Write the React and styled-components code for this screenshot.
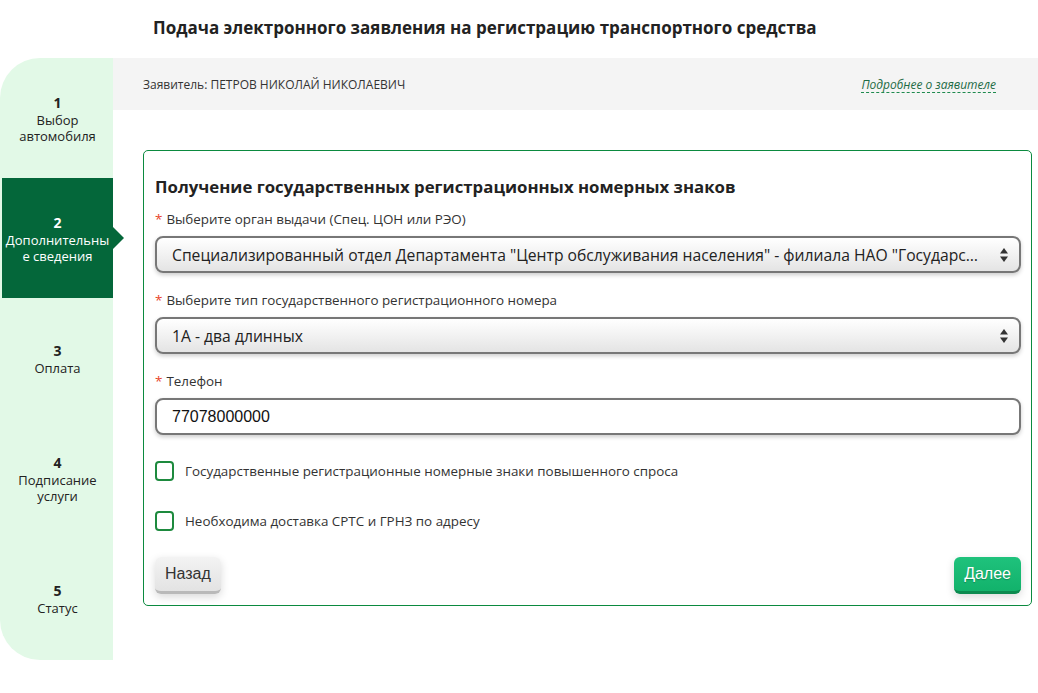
import React from "react";
import styled, { createGlobalStyle } from "styled-components";

const Global = createGlobalStyle`
  html, body { margin: 0; padding: 0; background: #fff; }
  body { font-family: "Open Sans", "Noto Sans", sans-serif; color: #222; }
  * { box-sizing: border-box; }
`;

const Page = styled.div`
  width: 1038px;
  height: 693px;
  overflow: hidden;
`;

const Title = styled.h1`
  margin: 0;
  height: 58px;
  padding: 17px 0 0 153px;
  font-size: 17px;
  line-height: 22px;
  font-weight: 700;
  color: #222;
`;

const Layout = styled.div`
  display: flex;
  align-items: flex-start;
`;

const Sidebar = styled.nav`
  width: 113px;
  flex: none;
  height: 602px;
  background: #e2f9e7;
  border-radius: 40px 0 0 40px;
  display: flex;
  flex-direction: column;
  padding-left: 2px;
`;

const Step = styled.div`
  position: relative;
  height: 120px;
  flex: none;
  display: flex;
  flex-direction: column;
  align-items: center;
  justify-content: center;
  text-align: center;
  background: ${(p) => (p.$active ? "#04673a" : "transparent")};
  color: ${(p) => (p.$active ? "#fff" : "#222")};
  font-size: 13px;
  line-height: 16px;
  ${(p) =>
    p.$active &&
    `
    &::after {
      content: "";
      position: absolute;
      right: -11px;
      top: 50%;
      margin-top: -11px;
      border-top: 11px solid transparent;
      border-bottom: 11px solid transparent;
      border-left: 11px solid #04673a;
    }
  `}
`;

const StepNum = styled.div`
  font-weight: 700;
  font-size: 14px;
  line-height: 19px;
`;

const StepLabel = styled.div`
  width: 112px;
`;

const Main = styled.main`
  flex: 1;
  min-width: 0;
  display: flex;
  flex-direction: column;
`;

const Applicant = styled.div`
  height: 52px;
  background: #f4f4f4;
  display: flex;
  align-items: center;
  justify-content: space-between;
  padding: 0 42px 0 30px;
`;

const ApplicantName = styled.span`
  font-size: 12px;
  color: #333;
`;

const MoreLink = styled.a`
  font-style: italic;
  font-size: 12px;
  color: #1e6b45;
  text-decoration: none;
  border-bottom: 1px dashed #1e8a4e;
  line-height: 14px;
  margin-top: 2px;
`;

const Card = styled.section`
  margin: 40px 6px 0 30px;
  border: 1px solid #0b8a3f;
  border-radius: 5px;
  padding: 25px 10px 11px 11px;
`;

const CardTitle = styled.h2`
  margin: 0 0 13px;
  font-size: 16.8px;
  line-height: 22px;
  font-weight: 700;
  color: #222;
`;

const Field = styled.div`
  margin-bottom: ${(p) => p.$mb || 19}px;
`;

const Label = styled.label`
  display: block;
  font-size: 13.4px;
  line-height: 17px;
  color: #333;
  margin-bottom: 8px;
`;

const Req = styled.span`
  color: #e8452c;
  margin-right: 4px;
`;

const SelectBox = styled.div`
  position: relative;
  height: 37px;
  border: 2px solid #777;
  border-radius: 8px;
  background: linear-gradient(#ffffff, #e4e4e4);
  box-shadow: 0 2px 4px rgba(0, 0, 0, 0.2);
  display: flex;
  align-items: center;
  padding: 0 34px 0 15px;
  font-size: 15.7px;
  color: #222;
`;

const SelectText = styled.span`
  flex: 1;
  min-width: 0;
  white-space: nowrap;
  overflow: hidden;
  text-overflow: ellipsis;
`;

const Arrows = styled.svg`
  position: absolute;
  right: 10px;
  top: 50%;
  margin-top: -8px;
`;

const Input = styled.div`
  height: 37px;
  border: 2px solid #777;
  border-radius: 8px;
  background: #fff;
  box-shadow: 0 2px 4px rgba(0, 0, 0, 0.2);
  display: flex;
  align-items: center;
  padding: 0 15px;
  font-family: "Liberation Sans", Arial, sans-serif;
  font-size: 16px;
  color: #111;
`;

const CheckRow = styled.label`
  display: flex;
  align-items: center;
  gap: 11px;
  height: 20px;
  margin-bottom: ${(p) => p.$mb || 30}px;
  font-size: 13.4px;
  color: #333;
`;

const Box = styled.span`
  width: 19px;
  height: 20px;
  border: 2px solid #1d8a3e;
  border-radius: 4px;
  flex: none;
`;

const Actions = styled.div`
  display: flex;
  justify-content: space-between;
  align-items: center;
`;

const Button = styled.button`
  height: 37px;
  padding: 0 10px;
  border: none;
  border-radius: 6px;
  font-family: "Liberation Sans", Arial, sans-serif;
  font-size: 16px;
  cursor: pointer;
  background: ${(p) =>
    p.$primary
      ? "linear-gradient(#1fc27c, #12b26b)"
      : "linear-gradient(#f3f3f3, #e3e3e3)"};
  color: ${(p) => (p.$primary ? "#fff" : "#333")};
  border-bottom: 3px solid ${(p) => (p.$primary ? "#0c8a4f" : "#b9b9b9")};
  box-shadow: 0 3px 8px rgba(0, 0, 0, 0.15);
  text-shadow: ${(p) => (p.$primary ? "0 1px 1px rgba(0,0,0,0.25)" : "none")};
`;

const SelectArrows = () => (
  <Arrows width="10" height="16" viewBox="0 0 10 16">
    <path d="M5 1 L9 6.5 L1 6.5 Z" fill="#333" />
    <path d="M5 15 L9 9.5 L1 9.5 Z" fill="#333" />
  </Arrows>
);

const steps = [
  ["1", ["Выбор", "автомобиля"]],
  ["2", ["Дополнительны", "е сведения"]],
  ["3", ["Оплата"]],
  ["4", ["Подписание", "услуги"]],
  ["5", ["Статус"]],
];

export default function App() {
  return (
    <Page>
      <Global />
      <Title>Подача электронного заявления на регистрацию транспортного средства</Title>
      <Layout>
        <Sidebar>
          {steps.map(([n, lines], i) => (
            <Step key={n} $active={i === 1}>
              <StepNum>{n}</StepNum>
              {lines.map((l) => (
                <StepLabel key={l}>{l}</StepLabel>
              ))}
            </Step>
          ))}
        </Sidebar>
        <Main>
          <Applicant>
            <ApplicantName>Заявитель: ПЕТРОВ НИКОЛАЙ НИКОЛАЕВИЧ</ApplicantName>
            <MoreLink href="#">Подробнее о заявителе</MoreLink>
          </Applicant>
          <Card>
            <CardTitle>Получение государственных регистрационных номерных знаков</CardTitle>
            <Field>
              <Label>
                <Req>*</Req>Выберите орган выдачи (Спец. ЦОН или РЭО)
              </Label>
              <SelectBox>
                <SelectText>
                  Специализированный отдел Департамента "Центр обслуживания населения" - филиала НАО "Государственная корпорация "Правительство для граждан"
                </SelectText>
                <SelectArrows />
              </SelectBox>
            </Field>
            <Field>
              <Label>
                <Req>*</Req>Выберите тип государственного регистрационного номера
              </Label>
              <SelectBox>
                <SelectText>1А - два длинных</SelectText>
                <SelectArrows />
              </SelectBox>
            </Field>
            <Field $mb={26}>
              <Label>
                <Req>*</Req>Телефон
              </Label>
              <Input>77078000000</Input>
            </Field>
            <CheckRow>
              <Box />
              Государственные регистрационные номерные знаки повышенного спроса
            </CheckRow>
            <CheckRow $mb={26}>
              <Box />
              Необходима доставка СРТС и ГРНЗ по адресу
            </CheckRow>
            <Actions>
              <Button>Назад</Button>
              <Button $primary>Далее</Button>
            </Actions>
          </Card>
        </Main>
      </Layout>
    </Page>
  );
}
